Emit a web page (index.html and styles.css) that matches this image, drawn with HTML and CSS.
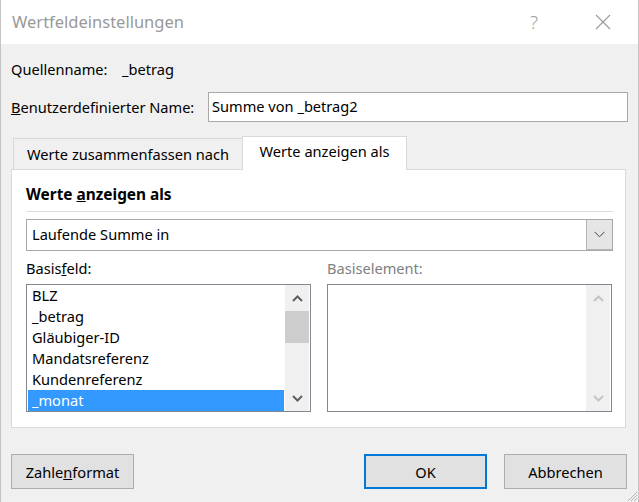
FILE: index.html
```html
<!DOCTYPE html>
<html lang="de">
<head>
<meta charset="utf-8">
<title>Wertfeldeinstellungen</title>
<link rel="stylesheet" href="styles.css">
</head>
<body>
<div class="dialog">
  <div class="titlebar">
    <span class="title">Wertfeldeinstellungen</span>
    <div class="caption-buttons">
      <span class="cap-btn help">?</span>
      <span class="cap-btn close">
        <svg width="16" height="16" viewBox="0 0 16 16"><path d="M1 1 L15 15 M15 1 L1 15" stroke="#9a9a9a" stroke-width="1.1" fill="none"/></svg>
      </span>
    </div>
  </div>
  <div class="body">
    <div class="row source-row">
      <span class="source-label">Quellenname:</span>
      <span class="source-value">_betrag</span>
    </div>
    <div class="row name-row">
      <span class="name-label"><u>B</u>enutzerdefinierter Name:</span>
      <div class="textbox">Summe von _betrag2</div>
    </div>
    <div class="tabs">
      <div class="tab">Werte zusammenfassen nach</div>
      <div class="tab active">Werte anzeigen als</div>
    </div>
    <div class="panel">
      <div class="heading">Werte <u>a</u>nzeigen als</div>
      <div class="sep"></div>
      <div class="combo">
        <span class="combo-text">Laufende Summe in</span>
        <span class="combo-btn">
          <svg width="11" height="7" viewBox="0 0 11 7"><polyline points="0.5,0.8 5.5,5.8 10.5,0.8" fill="none" stroke="#444" stroke-width="1"/></svg>
        </span>
      </div>
      <div class="lists">
        <div class="col">
          <div class="list-label">Basis<u>f</u>eld:</div>
          <div class="listbox">
            <ul class="items">
              <li>BLZ</li>
              <li>_betrag</li>
              <li>Gläubiger-ID</li>
              <li>Mandatsreferenz</li>
              <li>Kundenreferenz</li>
              <li class="selected">_monat</li>
            </ul>
            <div class="scrollbar">
              <span class="arrow">
                <svg width="11" height="7" viewBox="0 0 11 7"><polyline points="1,6 5.5,1.5 10,6" fill="none" stroke="#606060" stroke-width="2"/></svg>
              </span>
              <span class="thumb"></span>
              <span class="track"></span>
              <span class="arrow">
                <svg width="11" height="7" viewBox="0 0 11 7"><polyline points="1,1 5.5,5.5 10,1" fill="none" stroke="#606060" stroke-width="2"/></svg>
              </span>
            </div>
          </div>
        </div>
        <div class="col disabled">
          <div class="list-label">Basiselement:</div>
          <div class="listbox">
            <ul class="items"></ul>
            <div class="scrollbar">
              <span class="arrow">
                <svg width="11" height="7" viewBox="0 0 11 7"><polyline points="1,6 5.5,1.5 10,6" fill="none" stroke="#c4c4c4" stroke-width="2"/></svg>
              </span>
              <span class="track"></span>
              <span class="arrow">
                <svg width="11" height="7" viewBox="0 0 11 7"><polyline points="1,1 5.5,5.5 10,1" fill="none" stroke="#c4c4c4" stroke-width="2"/></svg>
              </span>
            </div>
          </div>
        </div>
      </div>
    </div>
    <div class="buttons">
      <span class="btn">Zahle<u>n</u>format</span>
      <span class="spacer"></span>
      <span class="btn default">OK</span>
      <span class="btn cancel">Abbrechen</span>
    </div>
  </div>
  <svg class="grip" width="11" height="11" viewBox="0 0 11 11">
    <path d="M10 1 L1 10 M10 4 L4 10 M10 7 L7 10" stroke="#b5b5b5" stroke-width="1" fill="none"/>
  </svg>
</div>
</body>
</html>
```
FILE: styles.css
```css
html, body {
  margin: 0;
  padding: 0;
  background: #ffffff;
}

body {
  font-family: "Noto Sans", "Open Sans", sans-serif;
  font-size: 14.6px;
  color: #000;
}

.dialog {
  position: relative;
  width: 639px;
  height: 502px;
  box-sizing: border-box;
  background: #f0f0f0;
  border-left: 1px solid #c4c4c4;
  border-right: 1px solid #c4c4c4;
  overflow: hidden;
}

.titlebar {
  height: 44px;
  background: #ffffff;
  display: flex;
  align-items: center;
  padding-left: 11px;
}

.title {
  font-size: 16.5px;
  color: #999999;
  padding-bottom: 1px;
}

.caption-buttons {
  margin-left: auto;
  display: flex;
  gap: 23px;
  padding-right: 12px;
}

.cap-btn {
  width: 46px;
  height: 30px;
  display: flex;
  align-items: center;
  justify-content: center;
}

.help {
  font-size: 19px;
  color: #a0a0a0;
  font-weight: 300;
}

.body {
  padding: 0 10px 0 10px;
}

.row {
  display: flex;
  align-items: center;
}

.source-row {
  margin-top: 15px;
  height: 20px;
  line-height: 20px;
}

.source-label {
  width: 111px;
}

.name-row {
  margin-top: 13px;
  height: 30px;
}

.name-label {
  width: 197px;
}

.textbox {
  flex: 1;
  height: 30px;
  box-sizing: border-box;
  border: 1px solid #a9a9a9;
  background: #fff;
  padding-left: 3px;
  line-height: 27px;
}

.tabs {
  margin-top: 14px;
  height: 33px;
  display: flex;
  align-items: flex-end;
  padding-left: 2px;
}

.tab {
  height: 31px;
  box-sizing: border-box;
  border: 1px solid #d9d9d9;
  border-bottom: none;
  background: #f0f0f0;
  display: flex;
  align-items: center;
  justify-content: center;
  width: 230px;
  padding-bottom: 1px;
}

.tab.active {
  position: relative;
  top: 1px;
  z-index: 1;
  height: 34px;
  width: 165px;
  margin-left: -1px;
  background: #ffffff;
  padding-bottom: 5px;
}

.panel {
  margin-right: 2px;
  height: 259px;
  box-sizing: border-box;
  border: 1px solid #d9d9d9;
  background: #ffffff;
  padding: 0 12px 0 14px;
}

.heading {
  margin-top: 15px;
  line-height: 20px;
  font-weight: bold;
  font-size: 15.4px;
}

.sep {
  margin-top: 6px;
  height: 1px;
  background: #dcdcdc;
}

.combo {
  margin-top: 7px;
  height: 32px;
  box-sizing: border-box;
  border: 1px solid #a9a9a9;
  display: flex;
  align-items: stretch;
}

.combo-text {
  flex: 1;
  padding-left: 5px;
  line-height: 29px;
}

.combo-btn {
  width: 25px;
  background: #e5e5e5;
  border: 1px solid #b4b4b4;
  border-width: 0 0 1px 1px;
  display: flex;
  align-items: center;
  justify-content: center;
}

.lists {
  display: grid;
  grid-template-columns: 285px 285px;
  column-gap: 16px;
  margin-top: 7px;
}

.list-label {
  line-height: 20px;
  margin-bottom: 6px;
}

.disabled .list-label {
  color: #808080;
}

.listbox {
  height: 128px;
  box-sizing: border-box;
  border: 1px solid #828790;
  background: #fff;
  display: flex;
  padding: 0 1px;
}

.items {
  flex: 1;
  list-style: none;
  margin: 0;
  padding: 0;
}

.items li {
  height: 21px;
  line-height: 21px;
  padding-left: 4px;
  margin-right: 1px;
}

.items li.selected {
  background: #3399ff;
  color: #fff;
}

.scrollbar {
  width: 24px;
  background: #f0f0f0;
  display: flex;
  flex-direction: column;
}

.scrollbar .arrow {
  height: 26px;
  display: flex;
  align-items: center;
  justify-content: center;
}

.scrollbar .thumb {
  height: 32px;
  background: #cdcdcd;
}

.scrollbar .track {
  flex: 1;
}

.buttons {
  margin-top: 26px;
  display: flex;
  margin-right: 1px;
}

.btn {
  width: 123px;
  height: 35px;
  box-sizing: border-box;
  border: 1px solid #adadad;
  background: #e1e1e1;
  display: flex;
  align-items: center;
  justify-content: center;
}

.btn.default {
  border: 2px solid #0078d7;
}

.btn.cancel {
  margin-left: 17px;
}

.spacer {
  flex: 1;
}

.grip {
  position: absolute;
  right: 0;
  bottom: 0;
}
```
